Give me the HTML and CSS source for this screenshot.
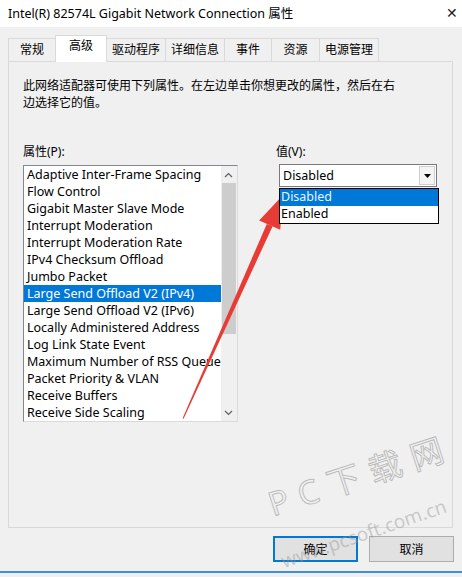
FILE: index.html
```html
<html lang="zh-CN">
<head>
    <meta charset="UTF-8">
    <title>Intel(R) 82574L Gigabit Network Connection 属性</title>
    <link rel="stylesheet" href="styles.css">
</head>
<body>
    <div class="window">
        <div class="titlebar">
            <span class="title">Intel(R) 82574L Gigabit Network Connection 属性</span>
            <span class="close">&#x2715;</span>
        </div>

        <div class="tabs">
            <div class="tab" style="width: 48px">常规</div>
            <div class="tab active" style="width: 52px">高级</div>
            <div class="tab" style="width: 60px">驱动程序</div>
            <div class="tab" style="width: 60px">详细信息</div>
            <div class="tab" style="width: 48px">事件</div>
            <div class="tab" style="width: 49px">资源</div>
            <div class="tab" style="width: 60px">电源管理</div>
        </div>

        <div class="panel">
            <p class="intro">此网络适配器可使用下列属性。在左边单击你想更改的属性，然后在右<br>边选择它的值。</p>

            <div class="fields">
                <div class="field-left">
                    <div class="label">属性(P):</div>
                    <div class="listbox">
                        <ul class="items" id="prop-list"></ul>
                        <div class="scrollbar">
                            <div class="sb-arrow">
                                <svg width="9" height="6" viewBox="0 0 9 6"><path d="M1 5 L4.5 1.5 L8 5" fill="none" stroke="#606060" stroke-width="1.2"/></svg>
                            </div>
                            <div class="sb-track">
                                <div class="sb-thumb"></div>
                            </div>
                            <div class="sb-arrow">
                                <svg width="9" height="6" viewBox="0 0 9 6"><path d="M1 1 L4.5 4.5 L8 1" fill="none" stroke="#606060" stroke-width="1.2"/></svg>
                            </div>
                        </div>
                    </div>
                </div>

                <div class="field-right">
                    <div class="label">值(V):</div>
                    <div class="combo">
                        <span class="combo-value">Disabled</span>
                        <span class="combo-btn">
                            <svg width="7" height="4" viewBox="0 0 7 4"><path d="M0 0 H7 L3.5 4 Z" fill="#000"/></svg>
                        </span>
                        <ul class="dropdown">
                            <li class="selected">Disabled</li>
                            <li>Enabled</li>
                        </ul>
                    </div>
                </div>
            </div>
        </div>

        <div class="buttons">
            <button class="btn default">确定</button>
            <button class="btn">取消</button>
        </div>
        <div class="frame-bottom"></div>
    </div>

    <!-- annotation arrow drawn over the dialog -->
    <svg class="arrow" width="462" height="577" viewBox="0 0 462 577">
        <polygon points="182.6,418.3 183.6,418.7 272.6,226.3 266.8,223.9" fill="#e63c35"/>
        <polygon points="283,195 280.2,229.7 259.2,220.5" fill="#e63c35"/>
    </svg>

    <div class="watermark big">P C 下 载 网</div>
    <div class="watermark small">www.pcsoft.com.cn</div>

    <script>
        const props = [
            "Adaptive Inter-Frame Spacing",
            "Flow Control",
            "Gigabit Master Slave Mode",
            "Interrupt Moderation",
            "Interrupt Moderation Rate",
            "IPv4 Checksum Offload",
            "Jumbo Packet",
            "Large Send Offload V2 (IPv4)",
            "Large Send Offload V2 (IPv6)",
            "Locally Administered Address",
            "Log Link State Event",
            "Maximum Number of RSS Queue",
            "Packet Priority & VLAN",
            "Receive Buffers",
            "Receive Side Scaling"
        ];

        const list = document.getElementById("prop-list");
        props.forEach((name, index) => {
            const li = document.createElement("li");
            li.textContent = name;
            if (index === 7) li.classList.add("selected");
            list.appendChild(li);
        });
    </script>
</body>
</html>
```

FILE: styles.css
```css
* {
    margin: 0;
    padding: 0;
    box-sizing: border-box;
}

body {
    font-family: "Noto Sans", "Noto Sans CJK SC", sans-serif;
    font-size: 12px;
    color: #000;
    background-color: #f0f0f0;
    width: 462px;
    height: 577px;
    overflow: hidden;
    position: relative;
}

.window {
    height: 577px;
    display: flex;
    flex-direction: column;
}

.titlebar {
    height: 27px;
    background-color: #fff;
    display: flex;
    align-items: center;
    justify-content: space-between;
    padding: 0 4px 2px 8px;
    font-size: 12.5px;
}

.close {
    font-size: 14px;
    color: #222;
    font-weight: 300;
}

.tabs {
    display: flex;
    align-items: flex-end;
    height: 34px;
    padding-left: 8px;
}

.tab {
    height: 23px;
    border: 1px solid #d9d9d9;
    border-bottom: none;
    margin-right: -1px;
    background-color: #f0f0f0;
    text-align: center;
    line-height: 22px;
}

.tab.active {
    height: 27px;
    background-color: #fff;
    line-height: 20px;
    position: relative;
    z-index: 1;
    margin-bottom: -1px;
}

.panel {
    margin: 0 9px 0 8px;
    height: 467px;
    border: 1px solid #d9d9d9;
    background-color: #f0f0f0;
    padding: 15px 14px 0 14px;
}

.intro {
    line-height: 17px;
}

.fields {
    display: flex;
    margin-top: 32px;
}

.label {
    line-height: 17px;
    height: 22px;
}

.field-left {
    width: 215px;
}

.listbox {
    height: 257px;
    border: 1px solid #dadada;
    border-top-color: #828790;
    border-left-color: #828790;
    background-color: #fff;
    display: flex;
}

.items {
    list-style: none;
    flex: 1;
}

.items li {
    height: 17px;
    line-height: 17px;
    padding-left: 3px;
    white-space: nowrap;
    overflow: hidden;
    font-size: 12.5px;
}

.items li.selected {
    background-color: #0078d7;
    color: #fff;
}

.scrollbar {
    width: 17px;
    background-color: #f0f0f0;
    display: flex;
    flex-direction: column;
}

.sb-arrow {
    height: 17px;
    display: flex;
    align-items: center;
    justify-content: center;
}

.sb-track {
    flex: 1;
    padding: 0 1px;
}

.sb-thumb {
    height: 151px;
    background-color: #cdcdcd;
}

.field-right {
    margin-left: 38px;
}

.combo {
    margin-left: 3px;
    margin-top: -1px;
    width: 158px;
    height: 23px;
    border: 1px solid #7a7a7a;
    background-color: #fff;
    display: flex;
    align-items: center;
    justify-content: space-between;
    position: relative;
    font-size: 12.5px;
}

.combo-value {
    padding-left: 3px;
}

.combo-btn {
    width: 16px;
    height: 19px;
    margin-right: 1px;
    border: 1px solid #d0d0d0;
    background-color: #f4f4f4;
    display: flex;
    align-items: center;
    justify-content: center;
}

.dropdown {
    list-style: none;
    position: absolute;
    left: -1px;
    top: 23px;
    width: 160px;
    border: 1px solid #000;
    background-color: #fff;
    z-index: 2;
}

.dropdown li {
    height: 17px;
    line-height: 16px;
    padding-left: 1px;
}

.dropdown li.selected {
    background-color: #0078d7;
    color: #e8f4ff;
}

.buttons {
    display: flex;
    justify-content: flex-end;
    gap: 11px;
    padding: 8px 8px 0 0;
}

.btn {
    width: 85px;
    height: 26px;
    font-family: "Noto Sans", "Noto Sans CJK SC", sans-serif;
    font-size: 12px;
    background-color: #e1e1e1;
    border: 1px solid #adadad;
    color: #000;
}

.btn.default {
    border: 2px solid #0078d7;
}

.frame-bottom {
    margin-top: auto;
    margin-bottom: 4px;
    height: 2px;
    background-color: #3c8fd6;
}

.arrow {
    position: absolute;
    left: 0;
    top: 0;
    pointer-events: none;
}

.watermark {
    position: absolute;
    pointer-events: none;
    white-space: nowrap;
    transform-origin: left bottom;
}

.watermark.big {
    left: 276px;
    top: 478px;
    font-size: 33px;
    letter-spacing: 1px;
    color: rgba(255, 255, 255, 0.15);
    -webkit-text-stroke: 1px rgba(140, 140, 140, 0.55);
    transform: rotate(-18deg);
}

.watermark.small {
    left: 286px;
    top: 548px;
    font-size: 19px;
    color: rgba(150, 150, 150, 0.45);
    transform: rotate(-19deg);
}
```
